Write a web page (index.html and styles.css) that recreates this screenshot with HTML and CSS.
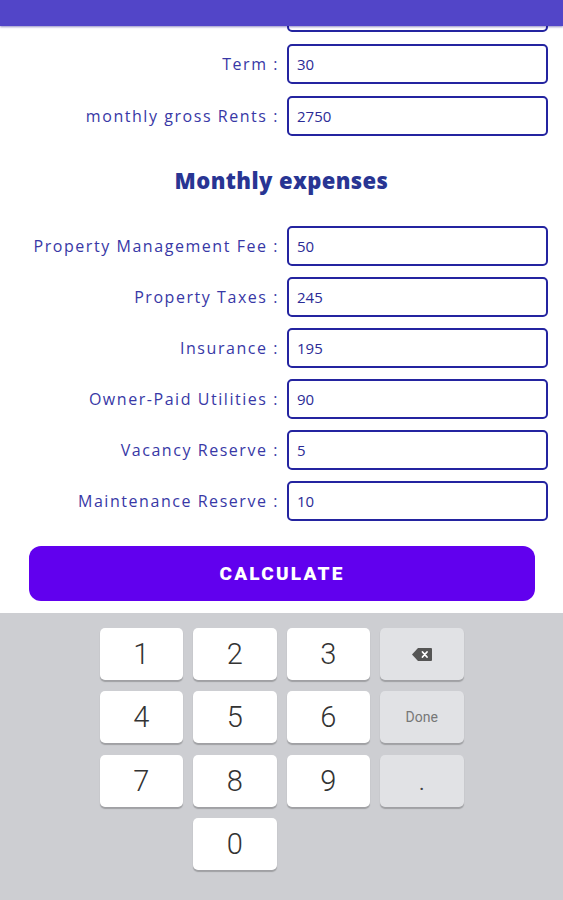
FILE: index.html
```html
<!DOCTYPE html>
<html lang="en">
<head>
<meta charset="utf-8">
<title>Monthly expenses</title>
<link rel="stylesheet" href="styles.css">
</head>
<body>
<div class="screen">
  <header class="appbar"></header>
  <main class="form">
    <div class="group">
      <div class="row"><label class="label">Interest Rate :</label><div class="field">4</div></div>
      <div class="row"><label class="label">Term :</label><div class="field">30</div></div>
      <div class="row"><label class="label">monthly gross Rents :</label><div class="field">2750</div></div>
    </div>
    <h2 class="heading">Monthly expenses</h2>
    <div class="group group-exp">
      <div class="row"><label class="label">Property Management Fee :</label><div class="field">50</div></div>
      <div class="row"><label class="label">Property Taxes :</label><div class="field">245</div></div>
      <div class="row"><label class="label">Insurance :</label><div class="field">195</div></div>
      <div class="row"><label class="label">Owner-Paid Utilities :</label><div class="field">90</div></div>
      <div class="row"><label class="label">Vacancy Reserve :</label><div class="field">5</div></div>
      <div class="row"><label class="label">Maintenance Reserve :</label><div class="field">10</div></div>
    </div>
    <button class="calc">CALCULATE</button>
  </main>
  <section class="keyboard">
    <div class="keys">
      <div class="key">1</div>
      <div class="key">2</div>
      <div class="key">3</div>
      <div class="key fn">
        <svg width="20" height="13" viewBox="0 0 20 13"><path d="M6 0H19a1 1 0 0 1 1 1V12a1 1 0 0 1-1 1H6L0 6.5Z" fill="#555"/><path d="M10.5 4l4.5 5M15 4l-4.5 5" stroke="#fff" stroke-width="1.8" stroke-linecap="round"/></svg>
      </div>
      <div class="key">4</div>
      <div class="key">5</div>
      <div class="key">6</div>
      <div class="key fn done">Done</div>
      <div class="key">7</div>
      <div class="key">8</div>
      <div class="key">9</div>
      <div class="key fn dot">.</div>
      <div class="key zero">0</div>
    </div>
  </section>
</div>
</body>
</html>
```

FILE: styles.css
```css
* { box-sizing: border-box; }
html, body { margin: 0; padding: 0; }
body {
  width: 563px;
  height: 900px;
  overflow: hidden;
  background: #fff;
  font-family: "Open Sans", "Noto Sans", sans-serif;
}
.screen {
  position: relative;
  width: 563px;
  height: 900px;
  overflow: hidden;
  display: flex;
  flex-direction: column;
}
.appbar {
  position: absolute;
  top: 0; left: 0; right: 0;
  height: 26px;
  background: #5245c8;
  box-shadow: 0 1px 2px rgba(40,30,140,0.5);
  z-index: 2;
}
.form {
  margin-top: -8px;
  display: flex;
  flex-direction: column;
}
.group {
  display: flex;
  flex-direction: column;
  gap: 12px;
}
.group-exp { gap: 11px; }
.row {
  display: grid;
  grid-template-columns: 1fr 261px;
  column-gap: 9px;
  padding-right: 15px;
  align-items: center;
}
.label {
  text-align: right;
  color: #3838a6;
  font-size: 16px;
  letter-spacing: 1.55px;
  white-space: nowrap;
  margin-right: -1px;
}
.field {
  height: 40px;
  border: 2px solid #2424a0;
  border-radius: 5px;
  padding: 0 8px;
  display: flex;
  align-items: center;
  color: #2b2b96;
  font-size: 15px;
}
.heading {
  margin: 29px 0 31px;
  height: 30px;
  line-height: 30px;
  text-align: center;
  font-size: 22px;
  font-weight: 800;
  color: #283593;
  letter-spacing: 0.4px;
}
.calc {
  margin: 25px 28px 12px 29px;
  height: 55px;
  border: none;
  border-radius: 12px;
  background: #6100ee;
  color: #fff;
  font-family: Roboto, "Liberation Sans", sans-serif;
  font-weight: 900;
  font-size: 19px;
  letter-spacing: 2.2px;
}
.keyboard {
  flex: 1;
  background: #cdced2;
  padding-top: 15px;
  display: flex;
  justify-content: center;
}
.keys {
  display: grid;
  grid-template-columns: repeat(4, 83.5px);
  grid-auto-rows: 52px;
  column-gap: 10px;
  row-gap: 11.3px;
  align-content: start;
}
.key {
  background: #fff;
  border-radius: 5px;
  box-shadow: 0 1.5px 1px rgba(0,0,0,0.22);
  display: flex;
  align-items: center;
  justify-content: center;
  font-family: Roboto, sans-serif;
  font-weight: 300;
  font-size: 29px;
  color: #333;
}
.key.fn { background: #e1e2e5; }
.key.done { font-size: 14px; font-weight: 400; color: #777; }
.key.dot { font-size: 28px; color: #444; }
.key.zero { grid-column: 2; }
```
